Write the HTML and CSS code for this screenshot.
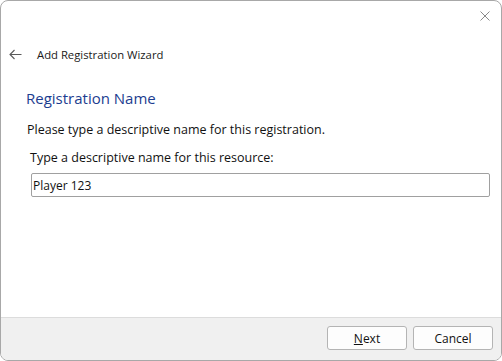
FILE: index.html
```html
<!DOCTYPE html>
<html lang="en">
<head>
    <meta charset="UTF-8">
    <title>Add Registration Wizard</title>
    <link rel="stylesheet" href="styles.css">
</head>
<body>
    <div class="window">
        <div class="titlebar">
            <button class="close-btn" aria-label="Close">
                <svg width="10" height="10" viewBox="0 0 10 10">
                    <path d="M0.5 0.5 L9.5 9.5 M9.5 0.5 L0.5 9.5" stroke="#8a8a8a" stroke-width="1" fill="none"/>
                </svg>
            </button>
        </div>
        <div class="nav">
            <svg class="back" width="13" height="11" viewBox="0 0 13 11">
                <path d="M12.5 5.5 H1 M5.5 1 L1 5.5 L5.5 10" stroke="#5a5a5a" stroke-width="1.1" fill="none"/>
            </svg>
            <span class="nav-title">Add Registration Wizard</span>
        </div>
        <div class="content">
            <h2 class="heading">Registration Name</h2>
            <p class="desc">Please type a descriptive name for this registration.</p>
            <label class="field-label" for="name">Type a descriptive name for this resource:</label>
            <input class="field" type="text" id="name" value="Player 123">
        </div>
        <div class="footer">
            <button class="btn"><u>N</u>ext</button>
            <button class="btn">Cancel</button>
        </div>
    </div>
</body>
</html>
```

FILE: styles.css
```css
* {
    margin: 0;
    padding: 0;
    box-sizing: border-box;
}

body {
    font-family: 'Open Sans', 'Noto Sans', sans-serif;
    font-size: 12px;
    color: #111111;
    background: #ffffff;
}

.window {
    width: 502px;
    height: 361px;
    border: 1px solid #a8a8a8;
    border-radius: 8px;
    overflow: hidden;
    display: flex;
    flex-direction: column;
    background: #ffffff;
}

.titlebar {
    height: 30px;
    display: flex;
    justify-content: flex-end;
    padding-right: 1px;
}

.close-btn {
    width: 30px;
    height: 30px;
    border: none;
    background: transparent;
    display: flex;
    align-items: center;
    justify-content: center;
}

.nav {
    height: 26px;
    margin-top: 10px;
    display: flex;
    align-items: center;
    padding-left: 8px;
}

.back {
    margin-right: 15px;
}

.nav-title {
    font-size: 11.3px;
    color: #1a1a1a;
}

.content {
    padding-left: 27px;
    padding-right: 11px;
    display: flex;
    flex-direction: column;
}

.heading {
    margin-top: 21px;
    margin-left: -2px;
    font-size: 15px;
    line-height: 20px;
    font-weight: normal;
    color: #1c3d90;
}

.desc {
    margin-top: 14px;
    margin-left: -1px;
    font-size: 12.5px;
    line-height: 16px;
}

.field-label {
    margin-top: 12px;
    padding-left: 2px;
    font-size: 12.5px;
    line-height: 16px;
}

.field {
    margin-top: 7px;
    margin-left: 3px;
    height: 24px;
    border: 1px solid #a0a0a0;
    border-radius: 2px;
    padding: 0 2px 0 1px;
    font-family: inherit;
    font-size: 12px;
    color: #111111;
    outline: none;
}

.footer {
    margin-top: auto;
    height: 43px;
    border-top: 1px solid #dcdcdc;
    background: #f0f0f0;
    display: flex;
    justify-content: flex-end;
    gap: 6px;
    padding: 8px 8px 0 0;
}

.btn {
    width: 80px;
    height: 24px;
    border: 1px solid #b4b4b4;
    border-radius: 3px;
    background: #fdfdfd;
    font-family: inherit;
    font-size: 12px;
    color: #111111;
}
```
